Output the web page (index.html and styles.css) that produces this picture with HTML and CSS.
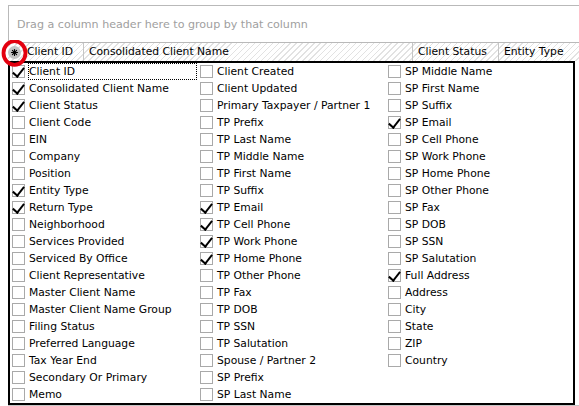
FILE: index.html
```html
<!DOCTYPE html>
<html>
<head>
<meta charset="utf-8">
<link rel="stylesheet" href="styles.css">
</head>
<body>
<div class="grid">
  <div class="group-panel">Drag a column header here to group by that column</div>
  <div class="header">
    <div class="hcell indicator"></div>
    <div class="hcell c-id">Client ID</div>
    <div class="hcell c-name">Consolidated Client Name</div>
    <div class="hcell c-status">Client Status</div>
    <div class="hcell c-entity">Entity Type</div>
  </div>
  <div class="popup">
    <div class="col">
      <div class="item"><span class="cb on"></span><span class="lbl focus">Client ID</span></div>
      <div class="item"><span class="cb on"></span><span class="lbl">Consolidated Client Name</span></div>
      <div class="item"><span class="cb on"></span><span class="lbl">Client Status</span></div>
      <div class="item"><span class="cb"></span><span class="lbl">Client Code</span></div>
      <div class="item"><span class="cb"></span><span class="lbl">EIN</span></div>
      <div class="item"><span class="cb"></span><span class="lbl">Company</span></div>
      <div class="item"><span class="cb"></span><span class="lbl">Position</span></div>
      <div class="item"><span class="cb on"></span><span class="lbl">Entity Type</span></div>
      <div class="item"><span class="cb on"></span><span class="lbl">Return Type</span></div>
      <div class="item"><span class="cb"></span><span class="lbl">Neighborhood</span></div>
      <div class="item"><span class="cb"></span><span class="lbl">Services Provided</span></div>
      <div class="item"><span class="cb"></span><span class="lbl">Serviced By Office</span></div>
      <div class="item"><span class="cb"></span><span class="lbl">Client Representative</span></div>
      <div class="item"><span class="cb"></span><span class="lbl">Master Client Name</span></div>
      <div class="item"><span class="cb"></span><span class="lbl">Master Client Name Group</span></div>
      <div class="item"><span class="cb"></span><span class="lbl">Filing Status</span></div>
      <div class="item"><span class="cb"></span><span class="lbl">Preferred Language</span></div>
      <div class="item"><span class="cb"></span><span class="lbl">Tax Year End</span></div>
      <div class="item"><span class="cb"></span><span class="lbl">Secondary Or Primary</span></div>
      <div class="item"><span class="cb"></span><span class="lbl">Memo</span></div>
    </div>
    <div class="col">
      <div class="item"><span class="cb"></span><span class="lbl">Client Created</span></div>
      <div class="item"><span class="cb"></span><span class="lbl">Client Updated</span></div>
      <div class="item"><span class="cb"></span><span class="lbl">Primary Taxpayer / Partner 1</span></div>
      <div class="item"><span class="cb"></span><span class="lbl">TP Prefix</span></div>
      <div class="item"><span class="cb"></span><span class="lbl">TP Last Name</span></div>
      <div class="item"><span class="cb"></span><span class="lbl">TP Middle Name</span></div>
      <div class="item"><span class="cb"></span><span class="lbl">TP First Name</span></div>
      <div class="item"><span class="cb"></span><span class="lbl">TP Suffix</span></div>
      <div class="item"><span class="cb on"></span><span class="lbl">TP Email</span></div>
      <div class="item"><span class="cb on"></span><span class="lbl">TP Cell Phone</span></div>
      <div class="item"><span class="cb on"></span><span class="lbl">TP Work Phone</span></div>
      <div class="item"><span class="cb on"></span><span class="lbl">TP Home Phone</span></div>
      <div class="item"><span class="cb"></span><span class="lbl">TP Other Phone</span></div>
      <div class="item"><span class="cb"></span><span class="lbl">TP Fax</span></div>
      <div class="item"><span class="cb"></span><span class="lbl">TP DOB</span></div>
      <div class="item"><span class="cb"></span><span class="lbl">TP SSN</span></div>
      <div class="item"><span class="cb"></span><span class="lbl">TP Salutation</span></div>
      <div class="item"><span class="cb"></span><span class="lbl">Spouse / Partner 2</span></div>
      <div class="item"><span class="cb"></span><span class="lbl">SP Prefix</span></div>
      <div class="item"><span class="cb"></span><span class="lbl">SP Last Name</span></div>
    </div>
    <div class="col">
      <div class="item"><span class="cb"></span><span class="lbl">SP Middle Name</span></div>
      <div class="item"><span class="cb"></span><span class="lbl">SP First Name</span></div>
      <div class="item"><span class="cb"></span><span class="lbl">SP Suffix</span></div>
      <div class="item"><span class="cb on"></span><span class="lbl">SP Email</span></div>
      <div class="item"><span class="cb"></span><span class="lbl">SP Cell Phone</span></div>
      <div class="item"><span class="cb"></span><span class="lbl">SP Work Phone</span></div>
      <div class="item"><span class="cb"></span><span class="lbl">SP Home Phone</span></div>
      <div class="item"><span class="cb"></span><span class="lbl">SP Other Phone</span></div>
      <div class="item"><span class="cb"></span><span class="lbl">SP Fax</span></div>
      <div class="item"><span class="cb"></span><span class="lbl">SP DOB</span></div>
      <div class="item"><span class="cb"></span><span class="lbl">SP SSN</span></div>
      <div class="item"><span class="cb"></span><span class="lbl">SP Salutation</span></div>
      <div class="item"><span class="cb on"></span><span class="lbl">Full Address</span></div>
      <div class="item"><span class="cb"></span><span class="lbl">Address</span></div>
      <div class="item"><span class="cb"></span><span class="lbl">City</span></div>
      <div class="item"><span class="cb"></span><span class="lbl">State</span></div>
      <div class="item"><span class="cb"></span><span class="lbl">ZIP</span></div>
      <div class="item"><span class="cb"></span><span class="lbl">Country</span></div>
    </div>
  </div>
  <div class="hscroll"></div>
</div>
<div class="marker">
  <svg width="28" height="30" viewBox="0 0 28 30">
    <circle cx="13.5" cy="12.5" r="6.5" fill="#c4c4c4"/>
    <g stroke="#000" stroke-width="1.1" stroke-linecap="round">
      <line x1="13.5" y1="9.5" x2="13.5" y2="15.5"/>
      <line x1="10.5" y1="12.5" x2="16.5" y2="12.5"/>
      <line x1="11.4" y1="10.4" x2="15.6" y2="14.6"/>
      <line x1="15.6" y1="10.4" x2="11.4" y2="14.6"/>
    </g>
    <ellipse cx="13.5" cy="13" rx="11" ry="11.8" fill="none" stroke="#e3000f" stroke-width="3.8"/>
  </svg>
</div>
</body>
</html>
```

FILE: styles.css
```css
html, body {
  margin: 0;
  padding: 0;
}
body {
  width: 579px;
  height: 406px;
  overflow: hidden;
  background: #fff;
  font-family: "DejaVu Sans", Verdana, sans-serif;
  font-size: 10.75px;
  color: #000;
  position: relative;
}
.grid {
  margin: 5px 0 0 8px;
}
.group-panel {
  height: 36px;
  border-top: 1px solid #b9b9b9;
  border-left: 1px solid #b9b9b9;
  display: flex;
  align-items: center;
  padding-left: 8px;
  color: #a0a0a0;
  font-size: 11.1px;
  white-space: nowrap;
}
.header {
  height: 18px;
  border-top: 1px solid #b9b9b9;
  display: flex;
  background: repeating-linear-gradient(135deg, #fff 0 2px, #e2e2e2 2px 3px, #fff 3px 4.2px);
  white-space: nowrap;
}
.hcell {
  box-sizing: border-box;
  height: 18px;
  line-height: 18px;
  padding-left: 5px;
  border-right: 1px solid #c6c6c6;
}
.indicator { width: 14px; border-right: none; padding: 0; }
.c-id { width: 62px; }
.c-name { width: 329px; }
.c-status { width: 86px; }
.c-entity { width: 80px; border-right: none; }
.popup {
  box-sizing: border-box;
  width: 567px;
  height: 344px;
  border: 2px solid #000;
  background: #fff;
  padding: 0 0 0 2px;
  display: grid;
  grid-template-columns: 188px 188px 1fr;
}
.col {
  display: flex;
  flex-direction: column;
}
.item {
  height: 17px;
  display: flex;
  align-items: center;
  white-space: nowrap;
}
.cb {
  box-sizing: border-box;
  width: 13px;
  height: 13px;
  border: 1px solid #a9a9a9;
  background: #fff;
  flex: none;
  position: relative;
}
.cb.on::after {
  content: "";
  position: absolute;
  left: 2px;
  top: -1px;
  width: 5px;
  height: 10px;
  border-right: 2px solid #000;
  border-bottom: 2px solid #000;
  transform: rotate(38deg) skewY(4deg);
  transform-origin: 50% 50%;
}
.lbl {
  margin-left: 4px;
  line-height: 17px;
}
.lbl.focus {
  box-sizing: border-box;
  height: 17px;
  line-height: 15px;
  margin-left: 3px;
  padding-left: 0;
  width: 169px;
  border: 1px dotted #000;
}
.hscroll {
  height: 1px;
  background: #c6c6c6;
}
.marker {
  position: absolute;
  left: 1px;
  top: 40px;
  width: 28px;
  height: 30px;
}
.marker svg {
  display: block;
}
```
